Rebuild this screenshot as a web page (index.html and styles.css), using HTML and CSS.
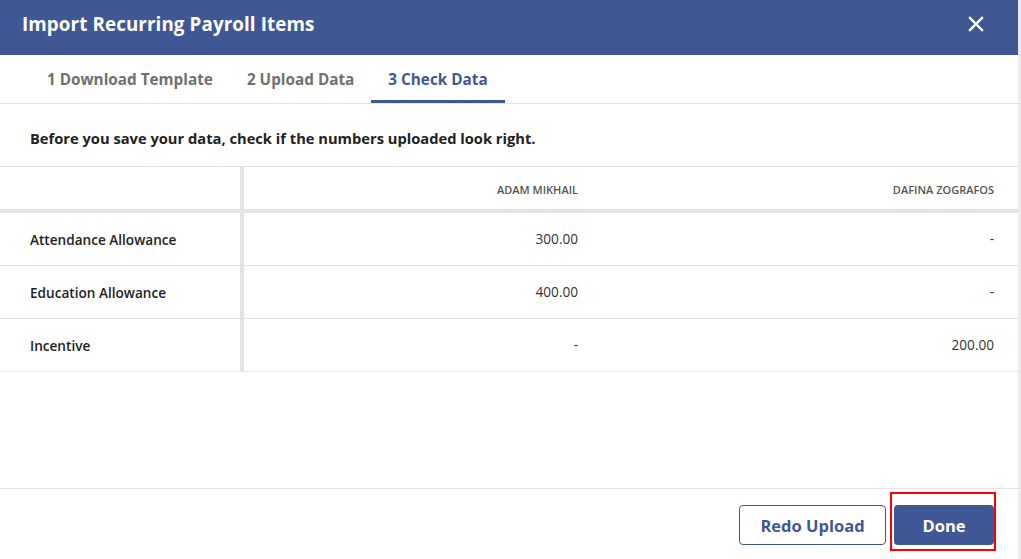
FILE: index.html
```html
<!DOCTYPE html>
<html lang="en">
<head>
  <meta charset="UTF-8">
  <title>Import Recurring Payroll Items</title>
  <link rel="stylesheet" href="styles.css">
</head>
<body>
  <div class="modal">
    <div class="modal-header">
      <h1>Import Recurring Payroll Items</h1>
      <button class="close" aria-label="Close">
        <svg width="16" height="16" viewBox="0 0 16 16"><path d="M2 2 L14 14 M14 2 L2 14" stroke="#fff" stroke-width="2.4" stroke-linecap="square"/></svg>
      </button>
    </div>

    <div class="tabs">
      <div class="tab">1 Download Template</div>
      <div class="tab">2 Upload Data</div>
      <div class="tab active">3 Check Data</div>
    </div>

    <p class="intro">Before you save your data, check if the numbers uploaded look right.</p>

    <div class="grid">
      <div class="row head">
        <div class="cell label"></div>
        <div class="cell num">ADAM MIKHAIL</div>
        <div class="cell num">DAFINA ZOGRAFOS</div>
      </div>
      <div class="row">
        <div class="cell label">Attendance Allowance</div>
        <div class="cell num">300.00</div>
        <div class="cell num">-</div>
      </div>
      <div class="row">
        <div class="cell label">Education Allowance</div>
        <div class="cell num">400.00</div>
        <div class="cell num">-</div>
      </div>
      <div class="row">
        <div class="cell label">Incentive</div>
        <div class="cell num">-</div>
        <div class="cell num">200.00</div>
      </div>
    </div>

    <div class="modal-footer">
      <button class="btn btn-outline">Redo Upload</button>
      <div class="done-wrap">
        <button class="btn btn-primary">Done</button>
        <span class="highlight"></span>
      </div>
    </div>
  </div>
</body>
</html>
```

FILE: styles.css
```css
body {
  margin: 0;
  background: #ececec;
  font-family: 'Open Sans', 'Lato', sans-serif;
  color: #222;
}

.modal {
  width: 1018px;
  height: 559px;
  background: #fff;
  display: flex;
  flex-direction: column;
}

.modal-header {
  height: 55px;
  background: #3f5895;
  display: flex;
  align-items: center;
  justify-content: space-between;
  padding: 0 34px 7px 22px;
  box-sizing: border-box;
  flex-shrink: 0;
}

.modal-header h1 {
  margin: 0;
  color: #fff;
  font-size: 18.8px;
  font-weight: 700;
  letter-spacing: 0.1px;
}

.close {
  background: none;
  border: none;
  padding: 0;
  display: flex;
  cursor: pointer;
}

.tabs {
  display: flex;
  height: 48px;
  padding-left: 30px;
  border-bottom: 1px solid #e3e3e3;
  flex-shrink: 0;
}

.tab {
  padding: 0 17px;
  display: flex;
  align-items: center;
  font-size: 15.3px;
  font-weight: 700;
  color: #707070;
  border-bottom: 3px solid transparent;
  padding-top: 3px;
}

.tab.active {
  color: #3f5895;
  border-bottom-color: #3f5895;
}

.intro {
  margin: 0;
  height: 62px;
  line-height: 69px;
  padding-left: 30px;
  font-size: 14.7px;
  font-weight: 700;
  color: #222;
}

.grid {
  border-top: 1px solid #e3e3e3;
}

.row {
  display: grid;
  grid-template-columns: 244px 356px 1fr;
  height: 52px;
  border-bottom: 1px solid #e3e3e3;
}

.row.head {
  height: 42px;
  border-bottom: 4px solid #e3e3e3;
}

.cell {
  display: flex;
  align-items: center;
  font-size: 13.6px;
}

.cell.label {
  padding-left: 30px;
  font-weight: 600;
  color: #222;
  border-right: 4px solid #e3e3e3;
}

.cell.num {
  justify-content: flex-end;
  padding-right: 22px;
  color: #333;
  padding-bottom: 2px;
}

.row.head .cell.num {
  font-size: 11px;
  font-weight: 600;
  color: #555;
  padding-top: 2px;
  padding-bottom: 0;
}

.row .cell.num:last-child {
  padding-right: 24px;
}

.modal-footer {
  margin-top: auto;
  height: 71px;
  border-top: 1px solid #e3e3e3;
  display: flex;
  justify-content: flex-end;
  align-items: flex-start;
  gap: 8px;
  padding: 16px 24px 0 0;
  box-sizing: border-box;
}

.btn {
  height: 40px;
  border-radius: 4px;
  font-family: inherit;
  font-size: 16.5px;
  font-weight: 700;
  cursor: pointer;
}

.btn-outline {
  width: 147px;
  background: #fff;
  border: 1px solid #3f5895;
  color: #3f5895;
}

.btn-primary {
  width: 100px;
  background: #3f5895;
  border: none;
  color: #fff;
}

.done-wrap {
  position: relative;
  display: flex;
}

.highlight {
  position: absolute;
  left: -4px;
  right: -2px;
  top: -13px;
  bottom: -6px;
  border: 2px solid #f00;
}
```
